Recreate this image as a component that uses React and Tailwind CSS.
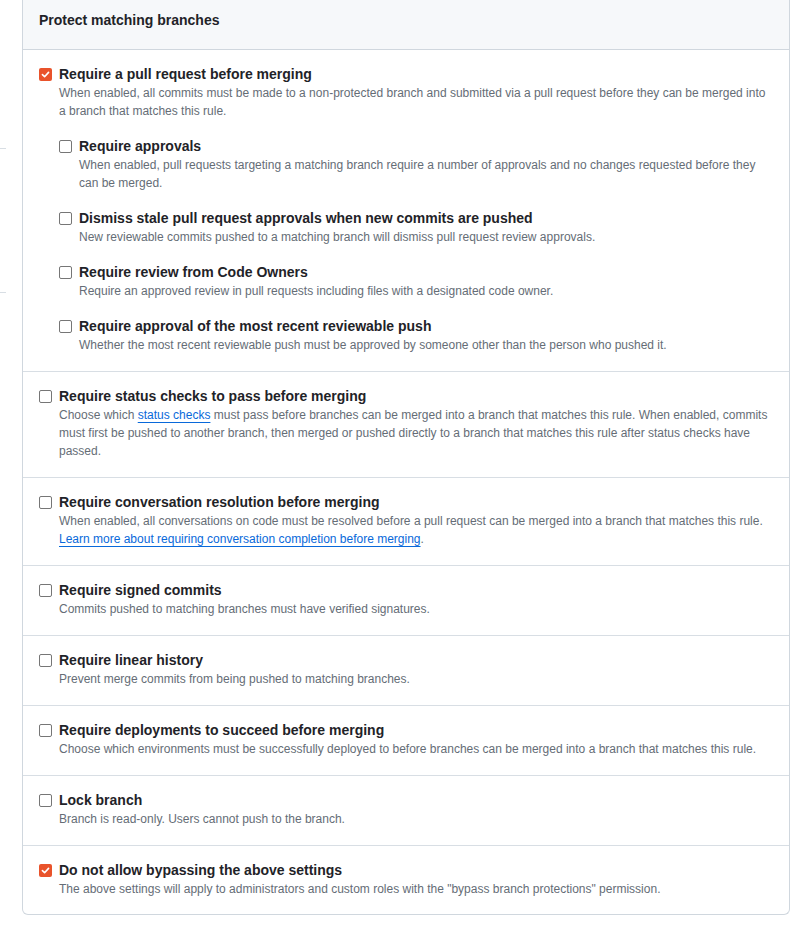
import React from "react";

function Box({ checked }) {
  if (checked) {
    return (
      <span className="mt-[4px] flex h-[13px] w-[13px] shrink-0 items-center justify-center rounded-[2px] bg-[#e9532b]">
        <svg width="9" height="9" viewBox="0 0 10 10" fill="none">
          <path d="M1.6 5.2 L4 7.5 L8.4 2.6" stroke="#fff" strokeWidth="1.8" strokeLinecap="round" strokeLinejoin="round" />
        </svg>
      </span>
    );
  }
  return (
    <span className="mt-[4px] block h-[13px] w-[13px] shrink-0 rounded-[2px] border border-[#767676] bg-white" />
  );
}

function Item({ checked, title, children, className = "" }) {
  return (
    <div className={"flex gap-[7px] " + className}>
      <Box checked={checked} />
      <div className="min-w-0 flex-1">
        <div className="text-[14px] font-bold leading-[20px] text-[#1f2328]">{title}</div>
        <div className="text-[12px] leading-[18px] text-[#656d76]">{children}</div>
      </div>
    </div>
  );
}

function Link({ children }) {
  return <a className="text-[#0969da] underline underline-offset-[3px]">{children}</a>;
}

function Section({ children, last }) {
  return (
    <div className={last ? "px-4 pb-[16px] pt-[14px]" : "border-b border-[#d8dee4] px-4 pb-[17px] pt-[14px]"}>
      {children}
    </div>
  );
}

export default function App() {
  return (
    <div
      className="flex h-[928px] w-[800px] overflow-hidden bg-white"
      style={{ fontFamily: '"Liberation Sans", Arial, sans-serif' }}
    >
      <div className="w-[22px] shrink-0">
        <div className="mt-[148px] h-px w-[6px] bg-[#d8dee4]" />
        <div className="mt-[143px] h-px w-[6px] bg-[#d8dee4]" />
      </div>
      <div className="w-[768px] shrink-0 self-start rounded-b-[6px] border-x border-b border-[#d0d7de]">
        <div className="h-[50px] border-b border-[#d0d7de] bg-[#f6f8fa] px-4 pt-[10px] text-[14px] font-bold leading-[20px] text-[#1f2328]">
          Protect matching branches
        </div>

        <div className="border-b border-[#d8dee4] px-4 pb-[17px] pt-[14px]">
          <Item checked title="Require a pull request before merging">
            When enabled, all commits must be made to a non-protected branch and submitted via a pull request before they can be merged into a branch that matches this rule.
          </Item>
          <div className="ml-5 mt-4 flex flex-col gap-4">
            <Item title="Require approvals">
              When enabled, pull requests targeting a matching branch require a number of approvals and no changes requested before they can be merged.
            </Item>
            <Item title="Dismiss stale pull request approvals when new commits are pushed">
              New reviewable commits pushed to a matching branch will dismiss pull request review approvals.
            </Item>
            <Item title="Require review from Code Owners">
              Require an approved review in pull requests including files with a designated code owner.
            </Item>
            <Item title="Require approval of the most recent reviewable push">
              Whether the most recent reviewable push must be approved by someone other than the person who pushed it.
            </Item>
          </div>
        </div>

        <Section>
          <Item title="Require status checks to pass before merging">
            Choose which <Link>status checks</Link> must pass before branches can be merged into a branch that matches this rule. When enabled, commits must first be pushed to another branch, then merged or pushed directly to a branch that matches this rule after status checks have passed.
          </Item>
        </Section>

        <Section>
          <Item title="Require conversation resolution before merging">
            When enabled, all conversations on code must be resolved before a pull request can be merged into a branch that matches this rule.{" "}
            <Link>Learn more about requiring conversation completion before merging</Link>.
          </Item>
        </Section>

        <Section>
          <Item title="Require signed commits">
            Commits pushed to matching branches must have verified signatures.
          </Item>
        </Section>

        <Section>
          <Item title="Require linear history">
            Prevent merge commits from being pushed to matching branches.
          </Item>
        </Section>

        <Section>
          <Item title="Require deployments to succeed before merging">
            Choose which environments must be successfully deployed to before branches can be merged into a branch that matches this rule.
          </Item>
        </Section>

        <Section>
          <Item title="Lock branch">
            Branch is read-only. Users cannot push to the branch.
          </Item>
        </Section>

        <Section last>
          <Item checked title="Do not allow bypassing the above settings">
            The above settings will apply to administrators and custom roles with the "bypass branch protections" permission.
          </Item>
        </Section>
      </div>
    </div>
  );
}
